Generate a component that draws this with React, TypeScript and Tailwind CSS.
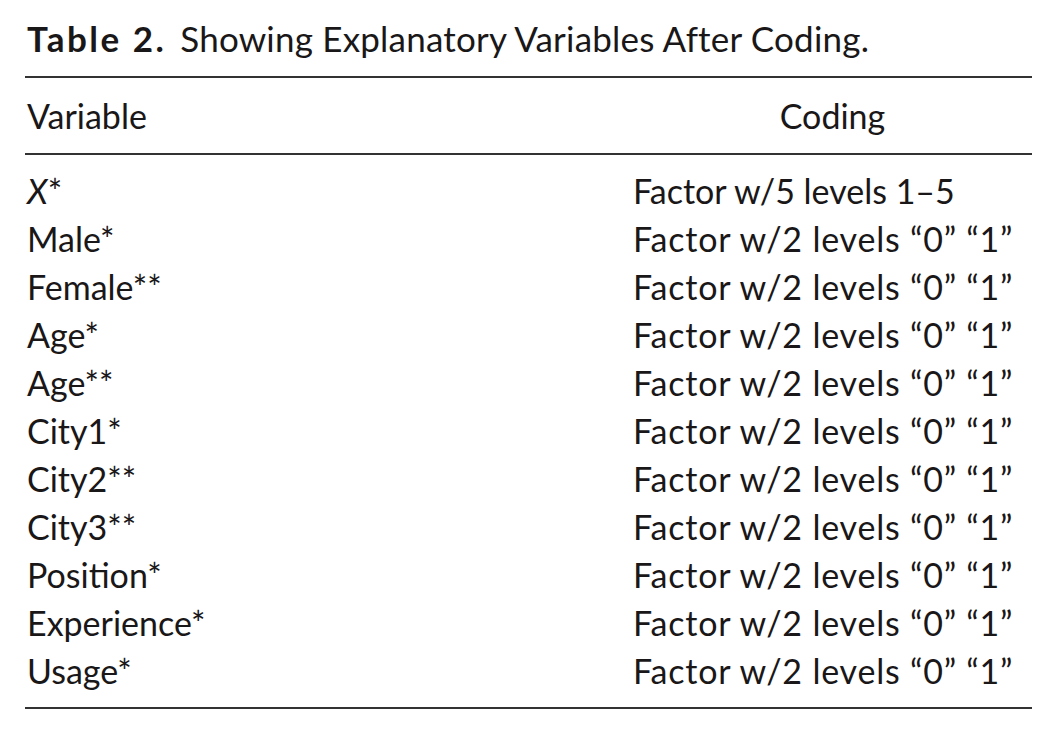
const rows: [string, string][] = [
  ["Male*", "Factor w/2 levels “0” “1”"],
  ["Female**", "Factor w/2 levels “0” “1”"],
  ["Age*", "Factor w/2 levels “0” “1”"],
  ["Age**", "Factor w/2 levels “0” “1”"],
  ["City1*", "Factor w/2 levels “0” “1”"],
  ["City2**", "Factor w/2 levels “0” “1”"],
  ["City3**", "Factor w/2 levels “0” “1”"],
  ["Position*", "Factor w/2 levels “0” “1”"],
  ["Experience*", "Factor w/2 levels “0” “1”"],
  ["Usage*", "Factor w/2 levels “0” “1”"],
]

export default function App() {
  return (
    <div className="w-[1058px] h-[734px] bg-white text-[#1a1718] font-['Lato',sans-serif]">
      <div className="pl-[25px] pr-[26px] pt-[16px]">
        {/* Caption */}
        <div className="text-[35px] leading-[45px] pl-[2px]">
          <span className="font-bold tracking-[2.5px]">Table 2.</span>
          <span className="ml-[14px] tracking-[0.2px]">Showing Explanatory Variables After Coding.</span>
        </div>

        {/* Header */}
        <div className="mt-[15px] border-t-2 border-b-2 border-[#333] flex text-[34px] leading-[75px]">
          <div className="w-[608px] pl-[2px]">Variable</div>
          <div className="flex-1 text-center">Coding</div>
        </div>

        {/* Body */}
        <div className="border-b-2 border-[#333] pt-[12px] pb-[12px] text-[34px] leading-[48px]">
          <div className="flex">
            <div className="w-[608px] pl-[2px] italic">
              X<span className="not-italic">*</span>
            </div>
            <div className="flex-1">Factor w/5 levels 1–5</div>
          </div>
          {rows.map(([name, coding], i) => (
            <div key={i} className="flex">
              <div className="w-[608px] pl-[2px]">{name}</div>
              <div className="flex-1 tracking-[0.8px]">{coding}</div>
            </div>
          ))}
        </div>
      </div>
    </div>
  )
}
